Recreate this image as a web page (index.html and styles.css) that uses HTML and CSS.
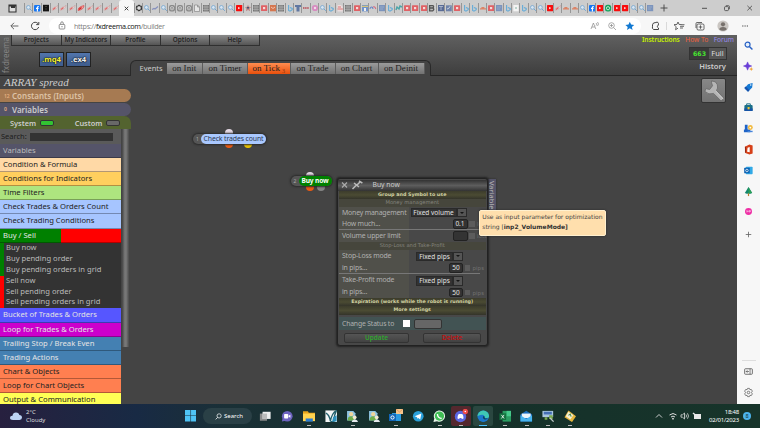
FILE: index.html
```html
<!DOCTYPE html>
<html lang="en">
<head>
  <meta charset="UTF-8">
  <title>fxDreema builder</title>
  <link rel="stylesheet" href="styles.css">
</head>
<body>
  <svg width="0" height="0" class="defs">
    <symbol id="q" viewBox="0 0 8 8"><circle cx="3.4" cy="3.4" r="1.9" fill="#d9e6f2" stroke="#73a6d0" stroke-width=".8"/><path d="M5 5l1.8 1.8" stroke="#73a6d0" stroke-width="1"/></symbol>
    <symbol id="f" viewBox="0 0 8 8"><rect x="1" y="1" width="6.4" height="6.6" rx="1" fill="#1877f2"/><path d="M4.4 7.6V3.4q0-1 1.4-.9M3 4.4h2.6" fill="none" stroke="#fff" stroke-width="1.1"/></symbol>
    <symbol id="k" viewBox="0 0 8 8"><path d="M1 .8h6v6.6H1z" fill="#151515"/><path d="M3 2.5h2M3 5h2" stroke="#665" stroke-width=".5"/></symbol>
    <symbol id="x" viewBox="0 0 8 8"><path d="M1 6.4q0-3 3-3.400t3-2q0 4-6 5.400" fill="#f0dcdc" stroke="#c9a5a5" stroke-width=".6"/><path d="M2 5.500l2.500-2" stroke="#d66" stroke-width="1.200"/></symbol>
    <symbol id="X" viewBox="0 0 8 8"><path d="M1 6.500q0-3 3-4t3-1q0 4-6 5" fill="#f0a0a0" stroke="#d44" stroke-width=".7"/><path d="M2 5.500l2.500-2" stroke="#c22" stroke-width="1.200"/></symbol>
    <symbol id="o" viewBox="0 0 8 8"><circle cx="4" cy="4" r="2.5" fill="#ddd" stroke="#333" stroke-width="1.5" stroke-dasharray="2.2 .4"/></symbol>
    <symbol id="w" viewBox="0 0 8 8"><path d="M1 5.5l2-1 1 .5 3-2.5" fill="none" stroke="#8690bd" stroke-width="1.2"/></symbol>
    <symbol id="g" viewBox="0 0 8 8"><rect x="1" y=".9" width="6" height="6.6" rx="2" fill="#898989"/><circle cx="4" cy="4.2" r="1.7" fill="none" stroke="#ddd" stroke-width=".7"/><circle cx="4" cy="4.2" r=".6" fill="#ddd"/></symbol>
    <symbol id="d" viewBox="0 0 8 8"><path d="M1.5 1h3l2 2v4.5h-5zM4.5 1v2h2" fill="#e6e6e6" stroke="#888" stroke-width=".7"/></symbol>
    <symbol id="n" viewBox="0 0 8 8"><path d="M1 1h6v6.5H1z" fill="#747474"/><path d="M1 3h6M1 5.3h6M3 1v6.5M5 1v6.5" stroke="#ccc" stroke-width=".5"/></symbol>
    <symbol id="y" viewBox="0 0 8 8"><rect x="1" y="1" width="6.2" height="6.2" rx=".6" fill="#f80d0d"/><path d="M3.2 2.9l2 1.2-2 1.2z" fill="#fff"/></symbol>
    <symbol id="Y" viewBox="0 0 8 8"><rect x="1" y="1.2" width="6.2" height="5.8" rx=".6" fill="#df6266"/><rect x="3" y="3" width="2.2" height="2.2" fill="#f4dada"/></symbol>
    <symbol id="s" viewBox="0 0 8 8"><path d="M4 .8l1 2 2 .3-1.5 1.6.6 2.6L4 6 2 7.3l.4-2.6L1 3.200l2-.4z" fill="#b88"/><path d="M3 3h2v1.6H3z" fill="#457"/></symbol>
    <symbol id="b" viewBox="0 0 8 8"><path d="M2.6 1v5.4l1.4.8 2.2-1.4v-1.3L3.9 3.6" fill="none" stroke="#66acd8" stroke-width="1.1"/></symbol>
    <symbol id="r" viewBox="0 0 8 8"><path d="M1 1h6v6.3H1z" fill="#d4764f"/><path d="M2 3l2 1.5L6 3" stroke="#f5ccbb" stroke-width=".9" fill="none"/></symbol>
    <symbol id="j" viewBox="0 0 8 8"><path d="M1 1h6v2H5.5v4.5h-3V3H1z" fill="#6178a2"/></symbol>
    <symbol id="i" viewBox="0 0 8 8"><path d="M1 4h6" stroke="#bd6b73" stroke-width="2.2" stroke-dasharray="1.5 .6"/></symbol>
    <symbol id="p" viewBox="0 0 8 8"><circle cx="4" cy="4" r="3.1" fill="#d78bc0"/><circle cx="4" cy="4" r="1.2" fill="#f1dcea"/></symbol>
    <symbol id="h" viewBox="0 0 8 8"><path d="M1.5 1H5l1.8 1.8v4.6H1.5z" fill="#ecdcdd"/><path d="M1.5 5h5.3M2 3h3" stroke="#d77" stroke-width="1"/></symbol>
    <symbol id="l" viewBox="0 0 8 8"><path d="M1 1h6v6.4H1z" fill="#6f93cb"/><path d="M1 2.3h6" stroke="#efd268"/><path d="M3 7V4h2v3z" fill="#eee"/></symbol>
    <symbol id="a" viewBox="0 0 8 8"><path d="M1 5q0-2 1.4-2T4 5" fill="none" stroke="#6784c4" stroke-width="1.1"/><path d="M4 3q2-1 2.8 2" fill="none" stroke="#d56b82" stroke-width="1.1"/></symbol>
    <symbol id="t" viewBox="0 0 8 8"><path d="M1 1h6.2v6.2H1z" fill="#7c94bd"/><path d="M2 3h4M2 5h3" stroke="#a9b9d2" stroke-width=".6"/></symbol>
    <symbol id="m" viewBox="0 0 8 8"><path d="M1 6l1-3 2 2 1-3 2 1" fill="none" stroke="#4ba5a8" stroke-width="1.4"/></symbol>
    <symbol id="B" viewBox="0 0 8 8"><path d="M1.6 1.6h3.2q1.6 1.2 0 2.4 2 1.2 0 2.8H1.6zM1.6 4h3" fill="#bbb" stroke="#555" stroke-width="1.3"/></symbol>
    <symbol id="T" viewBox="0 0 8 8"><path d="M1 1h6.2v6.2H1z" fill="#596b95"/><path d="M2 2.5h4M4 2.5V6" stroke="#c6cede" stroke-width=".7"/></symbol>
    <symbol id="e" viewBox="0 0 8 8"><path d="M1 1.3h5.8v6H1z" fill="#6f83aa"/><path d="M2 5q2 0 3-2.6" stroke="#e3e8ef" fill="none" stroke-width=".8"/></symbol>
    <symbol id="z" viewBox="0 0 8 8"><path d="M1 4.9h6M2.4 3.6h3" stroke="#dc8467" stroke-width="1.1"/></symbol>
    <symbol id="v" viewBox="0 0 8 8"><path d="M1.3 1h5.4v6.3H1.3z" fill="#f3f3f3"/><circle cx="4" cy="4" r=".8" fill="#7a9"/></symbol>
    <symbol id="u" viewBox="0 0 8 8"><rect x="1" y=".8" width="6.2" height="6.8" rx="2.5" fill="#18a35d"/><circle cx="4" cy="4.2" r="1.6" fill="none" stroke="#dff5e8" stroke-width=".8"/></symbol>
    <symbol id="person" viewBox="0 0 12 12"><path d="M1 1h6l2 2v7H1z" fill="#8fc4e2"/><circle cx="5" cy="4" r="2" fill="#f0d59b"/><path d="M1.500 10q0-4 3.500-4t3 4z" fill="#6fae4a"/><circle cx="8.3" cy="7" r="1.8" fill="#f4e9cf"/><path d="M5.500 12q0-3 2.900-3t3.100 3z" fill="#e8ecef"/></symbol>
  </svg>

  <div class="tabstrip">
    <svg class="workspace" viewBox="0 0 9 9"><path d="M1 1h7v7H1z" fill="#ddd" stroke="#333" stroke-width="1.1"/><path d="M1 1.7h7M3 3.2h4" stroke="#333" stroke-width="1.6"/></svg>
    <div class="tabs" id="tabsLeft"></div>
    <div class="tab-active"><svg viewBox="0 0 5 5"><path d="M.7.7l3.6 3.6M4.3.7L.7 4.3" stroke="#333" stroke-width=".9"/></svg></div>
    <div class="tabs tabs-right" id="tabsRight"></div>
    <svg class="newtab" viewBox="0 0 8 8"><path d="M4 .5v7M.5 4h7" stroke="#444" stroke-width=".9"/></svg>
    <svg class="winbtns" viewBox="0 0 52 8"><path d="M1 4.3h5" stroke="#444" stroke-width=".9"/><rect x="23.5" y="2.6" width="4" height="4" rx="1" fill="none" stroke="#444" stroke-width=".8"/><path d="M24.8 1.6h2.4q1.3 0 1.3 1.3v2.3" fill="none" stroke="#444" stroke-width=".7"/><path d="M46.4 1.8l4.6 4.6M51 1.8l-4.6 4.6" stroke="#444" stroke-width=".8"/></svg>
  </div>

  <div class="addressbar">
    <svg class="nav" viewBox="0 0 40 12"><path d="M9.4 6H2M5 2.8L1.8 6 5 9.2" fill="none" stroke="#555" stroke-width=".9"/><path d="M29 3.6A3.7 3.7 0 1 0 29.7 7M29.8 2v2.6h-2.6" fill="none" stroke="#444" stroke-width="1"/></svg>
    <div class="url">
      <svg class="lock" viewBox="0 0 8 9"><rect x="1.2" y="3.4" width="5.6" height="4.6" rx=".8" fill="none" stroke="#777" stroke-width=".8"/><path d="M2.7 3.4V2.2q0-1.4 1.3-1.4t1.3 1.4v1.2" fill="none" stroke="#777" stroke-width=".8"/><circle cx="4" cy="5.7" r=".6" fill="#777"/></svg>
      <span class="url-text">https://<b>fxdreema.com</b>/builder</span>
      <svg class="url-icons" viewBox="0 0 48 10"><path d="M1 8l2.4-6 2.4 6M1.9 6h3M6 2q1.5 1 0 2.6M7.5 1q2 2 0 4" fill="none" stroke="#888" stroke-width=".7"/><circle cx="21.5" cy="4.5" r="2.8" fill="none" stroke="#888" stroke-width=".7"/><path d="M23.6 6.6L26 9M20 4.5h3M21.5 3v3" stroke="#888" stroke-width=".7"/><path d="M39.8.8l1.3 2.8 3.1.3-2.3 2 .7 3-2.8-1.6L37 8.9l.7-3-2.3-2 3.1-.3z" fill="#1279d2"/></svg>
    </div>
    <svg class="tools" viewBox="0 0 104 14"><path d="M14.5 4.5q-1-2.5-2.6-1L9.5 4Q8 6 8.5 7.2 7.8 9.5 9.5 10.5h5V9q-2.6-1-.2-3z" fill="none" stroke="#444" stroke-width="1"/><path d="M22.5 3v8" stroke="#ccc" stroke-width=".7"/><path d="M34 3l1 2.4 2.8.2M34 3l-1 2.4-3 .3 2.2 2-.6 3L34 9.2M36 7.3h4M36 9h3M37.500 5.700h3" fill="none" stroke="#444" stroke-width=".8"/><rect x="53" y="5" width="7" height="6" rx="1.2" fill="none" stroke="#444" stroke-width=".8"/><path d="M52 9V4.500q0-1 1-1h5M56.500 6.300v3.500M54.700 8h3.600" fill="none" stroke="#444" stroke-width=".8"/><circle cx="79" cy="7" r="5.600" fill="#cac6c2"/><circle cx="79" cy="5.300" r="2.100" fill="#77716c"/><path d="M75.300 10.500q0-2.500 3.700-2.500t3.700 2.500q-3.700 2.500-7.400 0" fill="#77716c"/><path d="M98.200 7h7" stroke="#444" stroke-width="1.200" stroke-dasharray="1.200 1.100"/></svg>
  </div>

  <div class="main">
    <div class="app">
      <div class="header">
        <div class="brand"><span>fxdreema</span></div>
        <div class="header-left">
          <div class="menu"><span>Projects</span><span>My Indicators</span><span>Profile</span><span>Options</span><span>Help</span></div>
          <div class="export"><span class="mq4">.mq4</span><span>.ex4</span></div>
        </div>
        <div class="header-right">
          <div class="links"><span class="instr">Instructions</span><span class="howto">How To</span><span class="forum">Forum</span></div>
          <div class="counter"><span class="num">663</span><span class="full">Full</span></div>
          <div class="history">History</div>
        </div>
        <div class="events">
          <span class="events-label">Events</span>
          <span class="ev ev1">on Init</span><span class="ev ev2">on Timer</span><span class="ev ev3 active">on Tick<i>3</i></span><span class="ev ev4">on Trade</span><span class="ev ev5">on Chart</span><span class="ev ev6">on Deinit</span>
        </div>
      </div>

      <div class="work">
        <div class="sidebar">
          <div class="project">ARRAY spread</div>
          <div class="bar constants"><i>12</i>Constants (Inputs)</div>
          <div class="bar vars"><i>0</i>Variables</div>
          <div class="bar source"><span>System</span><em class="on"></em><span class="custom">Custom</span><em></em></div>
          <div class="panel">
            <div class="list">
              <div class="search">Search:<span class="search-input"></span></div>
              <div class="cat c-vars">Variables</div>
              <div class="cat c-cond">Condition &amp; Formula</div>
              <div class="cat c-ind">Conditions for Indicators</div>
              <div class="cat c-time">Time Filters</div>
              <div class="cat c-check">Check Trades &amp; Orders Count</div>
              <div class="cat c-check">Check Trading Conditions</div>
              <div class="cat c-buysell">Buy / Sell</div>
              <div class="sub">
                <div class="buy">Buy now</div>
                <div class="buy">Buy pending order</div>
                <div class="buy">Buy pending orders in grid</div>
                <div class="sell">Sell now</div>
                <div class="sell">Sell pending order</div>
                <div class="sell">Sell pending orders in grid</div>
              </div>
              <div class="cat c-bucket">Bucket of Trades &amp; Orders</div>
              <div class="cat c-loop">Loop for Trades &amp; Orders</div>
              <div class="cat c-trail">Trailing Stop / Break Even</div>
              <div class="cat c-trail">Trading Actions</div>
              <div class="cat c-chart">Chart &amp; Objects</div>
              <div class="cat c-chart">Loop for Chart Objects</div>
              <div class="cat c-out">Output &amp; Communication</div>
            </div>
            <div class="scroll"></div>
          </div>
        </div>

        <div class="canvas">
          <div class="wrench">
            <svg viewBox="0 0 24 24"><path d="M10 2q5 0 6 4t-1 6l8 8-3 3-8-8q-5 2-9-2l1-3 4 1 3-4-1-3z" fill="#b5b5b5" stroke="#666" stroke-width=".8"/><path d="M14 12l8 9" stroke="#ccc" stroke-width="1"/></svg>
          </div>

          <div class="node node-check">
            <b class="port in"></b><b class="port out orange"></b><b class="port out yellow"></b>
            <div class="node-body"><span class="id">1</span><span class="name">Check trades count</span></div>
          </div>
          <div class="node node-buy">
            <b class="port in"></b><b class="port out orange"></b><b class="port out grey"></b>
            <div class="node-body"><span class="id">2</span><span class="name">Buy now</span></div>
          </div>

          <div class="side-tab"><span>Variables</span></div>
          <div class="dialog">
            <div class="titlebar">
              <svg viewBox="0 0 24 10"><path d="M2 2.500l5 5M7 2.500l-5 5" stroke="#aaa" stroke-width="1.200"/><path d="M12.500 9l4-4M14 3l5 4M17 5l3-3M19 .800l3.400 2.400" stroke="#bbb" stroke-width="1.500"/></svg>
              <span>Buy now</span>
            </div>
            <div class="group">Group and Symbol to use</div>
            <div class="section">Money management</div>
            <div class="row"><label>Money management</label><div class="val"><span class="select wide">Fixed volume</span><span class="arrow"></span></div></div>
            <div class="row short"><label>How much...</label><div class="val"><span class="num-input">0.1</span><i class="chk"></i><span class="unit">lots</span></div></div>
            <div class="sep"></div>
            <div class="row"><label>Volume upper limit</label><div class="val"><span class="num-input"></span><i class="chk"></i><span class="unit">lots</span></div></div>
            <div class="section">Stop-Loss and Take-Profit</div>
            <div class="row tall"><label>Stop-Loss mode</label><div class="val"><span class="select">Fixed pips</span><span class="arrow"></span></div></div>
            <div class="row short"><label>in pips...</label><div class="val"><span class="num-input shift">50</span><i class="chk"></i><span class="unit">pips</span></div></div>
            <div class="sep"></div>
            <div class="row tall"><label>Take-Profit mode</label><div class="val"><span class="select">Fixed pips</span><span class="arrow"></span></div></div>
            <div class="row short"><label>in pips...</label><div class="val"><span class="num-input shift">50</span><i class="chk"></i><span class="unit">pips</span></div></div>
            <div class="group">Expiration (works while the robot is running)</div>
            <div class="group">More settings</div>
            <div class="status"><span>Change Status to</span><i></i><em></em></div>
            <div class="actions"><span class="update">Update</span><span class="delete">Delete</span></div>
          </div>

          <div class="tooltip"><div>Use as input parameter for optimization</div><div>string [<b>inp2_VolumeMode]</b></div></div>
        </div>
      </div>
    </div>

    <div class="edgebar">
      <svg viewBox="0 0 12 12"><circle cx="5" cy="5" r="2.700" fill="#e6f0fb" stroke="#2861c4" stroke-width="1.300"/><path d="M7 7l3.300 3.300" stroke="#2861c4" stroke-width="1.600"/></svg>
      <svg viewBox="0 0 12 12"><path d="M5 1l1.300 3.200L9.500 5.500 6.300 6.800 5 10 3.700 6.800.500 5.500l3.200-1.300z" fill="#6a3fd6" stroke="#6a3fd6" stroke-width=".6"/><path d="M9 6.500l.700 1.600 1.600.700-1.600.700L9 11l-.700-1.500-1.600-.700 1.600-.700z" fill="#f0a43c"/></svg>
      <svg viewBox="0 0 12 12"><path d="M5.500 2.500l5-1.500-.5 5-4.500 4.500-4-3.500z" fill="#1479d4"/><path d="M1.500 6l4 4.500L7 9 3 4.800z" fill="#1b4fa8"/><circle cx="8.500" cy="3.300" r=".8" fill="#fff"/></svg>
      <svg viewBox="0 0 12 12"><path d="M4 3.500V2h4v1.500" fill="none" stroke="#146a86" stroke-width="1"/><rect x="1.500" y="3.300" width="9" height="6.500" rx="1" fill="#1c6f88"/><path d="M1.500 7h9v2.800h-9z" fill="#1553a6"/><rect x="5" y="5.500" width="2.200" height="2.500" fill="#f3c530"/></svg>
      <svg viewBox="0 0 12 12"><path d="M2 2h3v5h3v3H1V7h1z" fill="#1e63c6"/><circle cx="8" cy="5" r="2.700" fill="#f1b93d"/><path d="M5 8.500h5.500v1.500H5z" fill="#4584da"/><circle cx="8" cy="5" r="1" fill="#fff"/></svg>
      <svg viewBox="0 0 12 12"><path d="M7 .5l3.500 1.200v8.600L7 11.500 2.500 9.800 2 3z" fill="#d64018"/><path d="M5 4l2.300-.8v5.800L4.500 8.500z" fill="#fff"/><path d="M2.700 3v6.500" stroke="#8f2414"/></svg>
      <svg viewBox="0 0 12 12"><rect x="3" y="2" width="7.500" height="8" rx=".8" fill="#31a9e6"/><rect x="1.300" y="3" width="6" height="6" rx=".6" fill="#0b62b3"/><circle cx="4.300" cy="6" r="1.400" fill="none" stroke="#fff" stroke-width=".8"/></svg>
      <svg viewBox="0 0 12 12"><path d="M6 1l4 6.500-2 1H4l-2-1z" fill="#14866d"/><path d="M6 1l4 6.500-4 .8z" fill="#2b9f57"/><path d="M6 8v3" stroke="#b97b2e" stroke-width="1.300"/></svg>
      <svg viewBox="0 0 12 12"><circle cx="6" cy="6" r="3.800" fill="#ee2fa5"/><path d="M4.300 7V5l1.300 1.300V5M7 7V5h1v1.500" fill="none" stroke="#fff" stroke-width=".6"/></svg>
      <svg class="plus" viewBox="0 0 12 12"><path d="M6 3v6M3 6h6" stroke="#666" stroke-width=".9"/></svg>
      <hr>
      <svg viewBox="0 0 12 12"><rect x="1.800" y="3" width="8.400" height="6" rx=".8" fill="none" stroke="#555" stroke-width=".9"/><path d="M7.700 3v6M3.300 6H6.500M4.800 4.700L3.500 6l1.300 1.300" fill="none" stroke="#555" stroke-width=".8"/></svg>
      <svg class="gear" viewBox="0 0 12 12"><path d="M5 1.500h2l.5 1.400 1.600-.2 1.100 1.800-1 1.500 1 1.500-1.100 1.800-1.600-.2L7 10.500H5l-.5-1.400-1.600.2-1.100-1.800 1-1.500-1-1.500 1.100-1.800 1.600.2z" fill="none" stroke="#555" stroke-width=".8"/><circle cx="6" cy="6" r="1.400" fill="none" stroke="#555" stroke-width=".8"/></svg>
    </div>
  </div>

  <div class="taskbar">
    <svg class="cloud" viewBox="0 0 14 10"><path d="M4 9Q1 9 1 6.800T3.500 4.700Q4 1.500 7 1.500T10.300 4q2.700.2 2.700 2.500T10.500 9z" fill="#bcd3f4"/></svg>
    <div class="weather">2°C<br>Cloudy</div>
    <svg class="start" viewBox="0 0 12 12"><path d="M0 0h5.700v5.700H0zM6.300 0H12v5.700H6.300zM0 6.300h5.700V12H0zM6.300 6.300H12V12H6.300z" fill="#4fc3f5"/></svg>
    <div class="tsearch"><svg viewBox="0 0 8 8"><circle cx="4.700" cy="3.300" r="2.400" fill="none" stroke="#fff" stroke-width=".8"/><path d="M3 5L.800 7.300" stroke="#fff" stroke-width=".9"/></svg>Search</div>
    <div class="apps">
      <span class="app-ico"><svg viewBox="0 0 14 14"><path d="M1 4h8v8H1z" fill="#8c8c8c"/><path d="M4 2h9v8H4z" fill="#eee"/><path d="M4 4h5v6H4z" fill="#bbb"/></svg></span>
      <span class="app-ico"><svg viewBox="0 0 14 14"><circle cx="7" cy="7" r="6" fill="#6d63c0"/><path d="M1 13l1-5 3 4z" fill="#6d63c0"/><rect x="3.500" y="4.600" width="4.600" height="4.800" rx=".8" fill="#fff"/><path d="M8.500 6.500l2-1.300v3.600l-2-1.300z" fill="#fff"/></svg></span>
      <span class="app-ico run"><svg viewBox="0 0 14 14"><path d="M0 1.500h5.500l1 1.500H14V7H0z" fill="#e8a51c"/><path d="M0 4h14v8.500H0z" fill="#ffd34f"/><path d="M3 9.500h8V13H3z" fill="#2b7bd1"/></svg></span>
      <span class="app-ico"><svg viewBox="0 0 14 14"><path d="M.500.500h13v13H.500z" fill="#f2f5f5"/><path d="M1 3.500q4 2 5 9Q8 3 13 .500q-3 5-3 12.500H6" fill="none" stroke="#22606c" stroke-width="1.500"/><path d="M9 8l4-2v7H8z" fill="#2d91bd"/></svg></span>
      <span class="app-ico run"><svg viewBox="0 0 12 12"><use href="#person"/></svg></span>
      <span class="app-ico"><svg viewBox="0 0 12 12"><use href="#person"/></svg></span>
      <span class="app-ico run"><svg class="big" viewBox="0 0 14 14"><path d="M3 4h9v8H3z" fill="#2b9be0"/><path d="M0 5h7v7H0z" fill="#1266b8"/><circle cx="3.500" cy="8.500" r="1.600" fill="none" stroke="#fff"/><path d="M7 0h7v5H7z" fill="#f6c58c"/><path d="M7 0l3.500 3L14 0" fill="none" stroke="#d98b51" stroke-width=".7"/></svg></span>
      <span class="app-ico"><svg viewBox="0 0 14 14"><circle cx="7" cy="7" r="6" fill="#2aa1da"/><path d="M3 7l7.500-3-1.300 6.500-2.200-1.600-1 1L5.700 8z" fill="#fff"/></svg></span>
      <span class="app-ico run"><svg viewBox="0 0 14 14"><path d="M.500 13.500l1-4A6.300 6.300 0 1 1 4.500 12.500z" fill="#e8f5ea"/><circle cx="7.200" cy="6.800" r="5.200" fill="#3fbf55"/><path d="M5 4.500q0 4.500 4.700 5" fill="none" stroke="#fff" stroke-width="1.500"/></svg></span>
      <span class="app-ico run discord"><svg class="big" viewBox="0 0 14 14"><circle cx="6.500" cy="7.500" r="5.700" fill="#5a66e0"/><path d="M3.500 9.500q0-4 1.500-4.500h3q1.500.5 1.500 4.500l-1.500.5-.8-1h-1.400l-.8 1z" fill="#fff"/><circle cx="11.300" cy="2.500" r="2.700" fill="#f04a4a"/><circle cx="11.300" cy="2.500" r=".8" fill="#fff"/></svg></span>
      <span class="app-ico edge"><svg viewBox="0 0 14 14"><circle cx="7" cy="7" r="6.500" fill="#1b78cd"/><path d="M.500 7a6.500 6.500 0 0 1 13 0q0 2.500-3.500 2.500-2 0-1.500-2Q8 5 5.500 5.300 2.500 5.500.500 7" fill="#3fc7b4"/><path d="M8.500 7.500q-.5 2 1.500 2 1.500 0 2.500-.8-2 3-5 1.300-1.500-1-.5-3 1-.5 1.500.5" fill="#0d3f62"/></svg></span>
      <span class="app-ico run"><svg viewBox="0 0 14 14"><path d="M4 1h9.500v12H4z" fill="#2a9d61"/><path d="M8.500 1h5v6h-5z" fill="#45c98a"/><path d="M.500 3.800h7.500v7.400H.500z" fill="#12713e"/><path d="M2.700 5.500l3 4M5.700 5.500l-3 4" stroke="#fff" stroke-width=".9"/></svg></span>
      <span class="app-ico run"><svg viewBox="0 0 14 14"><path d="M.500 5L7 .800 13.500 5v8H.500z" fill="#1b6fc0"/><path d="M2 4h10v5H2z" fill="#eaf4fb"/><path d="M.500 6L7 10l6.500-4v7H.500z" fill="#47b4ee"/></svg></span>
      <span class="app-ico run"><svg viewBox="0 0 14 14"><path d="M.500 1h12v7H.500z" fill="#a9c5df"/><path d="M2 2h9v3H2z" fill="#456fb5"/><path d="M3 8h3v3H3zM8 6h4v4H8z" fill="#7caa50"/><path d="M9 9l4 4" stroke="#bfc8c9" stroke-width="1.500"/></svg></span>
      <span class="app-ico run"><svg viewBox="0 0 14 14"><path d="M5 .500L13.500 7 9 13.500.500 8z" fill="#e7b73d"/><path d="M5 2l5.500 4L7 10.500 2 7z" fill="#f6f0d6"/><path d="M5 6l2-1.500 1 3" fill="none" stroke="#4b8b48" stroke-width="1.200"/></svg></span>
    </div>
    <svg class="tray" viewBox="0 0 48 12"><path d="M1 7.500l3-3 3 3" fill="none" stroke="#ddd" stroke-width=".9"/><path d="M14.500 5q3.500-3 7 0M16 7q2-1.800 4 0" fill="none" stroke="#ddd" stroke-width="1"/><circle cx="18" cy="8.700" r=".9" fill="#ddd"/><path d="M26 4.800h1.500l2-1.800v6l-2-1.800H26zM31 4.500q1 1.500 0 3M32.500 3.300q2 2.700 0 5.400" fill="none" stroke="#ddd" stroke-width=".8"/><path d="M39 4h7v5h-7z" fill="#e9e9e9"/><path d="M38 3l3 2.500" stroke="#e9e9e9" stroke-width="1.500"/></svg>
    <div class="clock">18:48<br>02/01/2023</div>
    <span class="badge">8</span>
  </div>

  <script>
    // one letter per open tab, each is the id of its favicon symbol
    const left = 'qfkxxxXxxxx';
    const right = 'oqwqgggdnqqqysnYrnbjipqbhnYlatbmYYYBTeYbbzYtbvbqqyxzzqfyuyyqqt';

    function drawTabs(id, icons) {
      document.getElementById(id).innerHTML = [...icons]
        .map(c => `<span class="tab"><svg viewBox="0 0 8 8"><use href="#${c}"/></svg></span>`)
        .join('');
    }

    drawTabs('tabsLeft', left);
    drawTabs('tabsRight', right);
  </script>
</body>
</html>
```
FILE: styles.css
```css
* {
  box-sizing: border-box;
}

body {
  margin: 0;
  width: 760px;
  height: 428px;
  overflow: hidden;
  display: flex;
  flex-direction: column;
  font-family: "Noto Sans", sans-serif;
  font-size: 8px;
  background: #444;
}

svg {
  display: block;
  flex: none;
}

i, em {
  font-style: normal;
}

span, div, label {
  white-space: nowrap;
}

.defs {
  position: absolute;
}

/* browser */
.tabstrip {
  height: 16px;
  flex: none;
  display: flex;
  align-items: center;
  background: #cdcdcd;
}

.workspace {
  width: 9px;
  height: 9px;
  margin: 0 3.5px 0 7.5px;
}

.tabs {
  display: flex;
  width: 99px;
  flex: none;
  padding-left: 3.5px;
}

.tab {
  width: 8.73px;
  height: 10px;
  flex: none;
  border-left: 1px solid #969696;
  display: flex;
  align-items: center;
}

.tab svg {
  width: 8px;
  height: 8px;
}

.tabs-right {
  width: 521px;
  padding: 0;
}

.tabs-right .tab {
  width: 8.4px;
}

.tab-active {
  width: 14.5px;
  height: 16px;
  flex: none;
  background: #f7f7f7;
  border-radius: 3px 3px 0 0;
  display: flex;
  align-items: center;
  justify-content: center;
}

.tab-active svg {
  width: 5px;
  height: 5px;
}

.newtab {
  width: 8px;
  height: 8px;
  margin-left: 5px;
}

.winbtns {
  width: 52px;
  height: 8px;
  margin-left: 33px;
}

.addressbar {
  height: 19px;
  flex: none;
  display: flex;
  align-items: center;
  background: #f7f7f7;
}

.nav {
  width: 40px;
  height: 12px;
  margin-left: 9px;
}

.url {
  width: 592px;
  height: 16px;
  border-radius: 8px;
  background: #fff;
  display: flex;
  align-items: center;
  padding-left: 9px;
}

.lock {
  width: 8px;
  height: 9px;
  margin-right: 8px;
}

.url-text {
  font-family: "Open Sans", sans-serif;
  font-size: 7.2px;
  letter-spacing: -.32px;
  color: #808080;
}

.url-text b {
  font-weight: normal;
  color: #111;
}

.url-icons {
  width: 48px;
  height: 10px;
  margin-left: auto;
  margin-right: 3px;
}

.tools {
  width: 104px;
  height: 14px;
  margin-left: 3px;
}

/* app */
.main {
  height: 369px;
  flex: none;
  display: flex;
}

.app {
  width: 737px;
  display: flex;
  flex-direction: column;
  background: #444;
}

.header {
  height: 41px;
  flex: none;
  position: relative;
  display: flex;
  background: linear-gradient(#606060, #3e3e3e);
  border-bottom: 1px solid #262626;
}

.brand {
  width: 11px;
  color: #858585;
  display: flex;
  align-items: center;
  justify-content: center;
}

.brand span {
  writing-mode: vertical-rl;
  transform: rotate(180deg);
  font-size: 8px;
}

.menu {
  display: flex;
  width: 249px;
  height: 10.5px;
  border: 1px solid #303030;
  border-top: 0;
  background: linear-gradient(#8a8a8a, #555);
}

.menu span {
  flex: 1;
  text-align: center;
  font-weight: 600;
  font-size: 6.4px;
  line-height: 9px;
  color: #262626;
}

.menu span + span {
  border-left: 1px solid #303030;
}

.export {
  display: flex;
  gap: 2px;
  padding: 6.5px 0 0 28px;
}

.export span {
  width: 25px;
  height: 15px;
  border: 1px solid #222;
  background: linear-gradient(#5275ac, #3e5c8c);
  color: #eee;
  font-size: 7.7px;
  font-weight: bold;
  line-height: 13px;
  text-align: center;
  text-shadow: 0 0 1px #000, 0 0 2px #000;
}

.export .mq4 {
  color: #f2ef38;
}

.header-right {
  margin-left: auto;
  display: flex;
  flex-direction: column;
  align-items: flex-end;
  padding-right: 3px;
}

.links {
  display: flex;
  gap: 5.5px;
  font-size: 6.6px;
  line-height: 9px;
}

.instr {
  color: #c6f000;
  font-weight: 600;
  letter-spacing: -.1px;
}

.howto {
  color: #f0603c;
}

.forum {
  color: #9a8cf0;
}

.counter {
  margin: 3px 7px 0 0;
  width: 38px;
  height: 13px;
  border: 1px solid #333;
  background: #3a3a3a;
  display: flex;
  line-height: 11px;
}

.counter .num {
  width: 19px;
  text-align: center;
  color: #46e030;
  font-family: "DejaVu Sans", sans-serif;
  font-size: 6.3px;
  line-height: 12px;
  font-weight: bold;
}

.counter .full {
  flex: 1;
  text-align: center;
  background: #555;
  color: #ddd;
  font-size: 7.5px;
}

.history {
  margin: 0 8px 0 0;
  color: #ccc;
  font-size: 7.6px;
  font-weight: 600;
  line-height: 12px;
}

.events {
  position: absolute;
  left: 130px;
  top: 25px;
  width: 301px;
  height: 16px;
  border: 1px solid #292929;
  border-bottom: 0;
  border-radius: 6px 6px 0 0;
  background: #444;
  display: flex;
  padding: 2px 0 0 8.5px;
}

.events-label {
  width: 27px;
  flex: none;
  color: #ccc;
  font-size: 7.5px;
  line-height: 11px;
}

.ev {
  height: 11px;
  flex: none;
  line-height: 10px;
  text-align: center;
  color: #222;
  font-family: "Liberation Serif", serif;
  font-size: 9px;
  letter-spacing: .05px;
  background: linear-gradient(#9b9b9b, #727272);
  border-right: 1px solid #5c5c5c;
}

.ev1 { width: 36.5px; }
.ev2 { width: 45px; }
.ev3 { width: 42.5px; }
.ev4 { width: 45px; }
.ev5 { width: 43px; }
.ev6 { width: 46px; }

.ev.active {
  background: linear-gradient(#ff8d50, #e9500c);
}

.ev i {
  font-size: 6px;
  vertical-align: -2px;
  color: #8d3813;
  margin-left: 2px;
}

.work {
  flex: 1;
  min-height: 0;
  display: flex;
}

.sidebar {
  width: 131px;
  display: flex;
  flex-direction: column;
}

.project {
  height: 13px;
  flex: none;
  padding-left: 4px;
  font-family: "Liberation Serif", serif;
  font-style: italic;
  font-size: 11px;
  line-height: 12px;
  color: #ccc;
}

.bar {
  height: 13px;
  flex: none;
  margin-bottom: .7px;
  padding-left: 4px;
  border-radius: 0 7px 7px 0;
  display: flex;
  align-items: center;
  font-size: 8px;
  font-weight: 600;
  color: #ccc;
}

.bar i {
  width: 8px;
  font-size: 5px;
  color: #e5b080;
}

.constants {
  background: #a67a52;
  color: #ddc2a5;
}

.vars {
  background: #555469;
}

.source {
  background: #53632f;
  margin: 0;
  padding-left: 10px;
  border-radius: 0 7px 0 0;
  font-size: 7.4px;
}

.source em {
  width: 14px;
  height: 6px;
  margin-left: 4px;
  border-radius: 2px;
  border: 1px solid #333;
  background: #686868;
}

.source .on {
  background: #32c332;
}

.custom {
  margin-left: 20.5px;
}

.panel {
  flex: 1;
  min-height: 0;
  display: flex;
  overflow: hidden;
}

.list {
  width: 121px;
}

.search {
  height: 14.3px;
  background: #5a5a5a;
  color: #1c1c1c;
  font-size: 7.5px;
  line-height: 13px;
  padding-left: 1px;
  display: flex;
  align-items: center;
}

.search-input {
  width: 83px;
  height: 8px;
  margin-left: 3px;
  background: #333;
}

.cat {
  height: 14.17px;
  padding-left: 3px;
  font-size: 7.65px;
  line-height: 13.2px;
  color: #222;
  border-bottom: .5px solid rgba(0, 0, 0, .3);
}

.c-vars { background: #555469; color: #bbb; }
.c-cond { background: #ffd9a6; }
.c-ind { background: #ffcf5e; }
.c-time { background: #aee57f; }
.c-check { background: #a6c5ff; }
.c-buysell { background: linear-gradient(90deg, #008000 50%, #f00 50%); color: #e4e4e4; }
.c-bucket { background: #5656ff; color: #e4e4e4; }
.c-loop { background: #cc00cc; color: #e4e4e4; }
.c-trail { background: #4480b2; color: #e4e4e4; }
.c-chart { background: #ff7f50; }
.c-out { background: #ffff55; }

.sub {
  background: #333;
}

.sub div {
  height: 10.95px;
  padding-left: 2px;
  border-left: 4px solid #008000;
  font-size: 7.6px;
  line-height: 9.6px;
  color: #bbb;
}

.sub .sell {
  border-color: #f00;
}

.scroll {
  width: 7px;
  height: 218px;
  margin-left: 1px;
  background: linear-gradient(90deg, #444, #777 40%, #777 60%, #4a4a4a);
}

.canvas {
  flex: 1;
  position: relative;
}

.wrench {
  position: absolute;
  left: 570px;
  top: 2px;
  width: 25px;
  height: 25px;
  border: 1px solid #333;
  border-radius: 2px;
  background: linear-gradient(#878787, #737373);
}

.wrench svg {
  width: 23px;
  height: 23px;
}

/* nodes */
.node {
  position: absolute;
}

.node-check {
  left: 62px;
  top: 57.5px;
}

.node-buy {
  left: 159.5px;
  top: 100px;
}

.node-body {
  position: relative;
  display: flex;
  height: 10px;
  padding-left: 1px;
  border-radius: 5px;
  background: #555;
  box-shadow: 0 0 2px 1px #2a2a2a;
}

.node .id {
  width: 7px;
  font-size: 5px;
  line-height: 10px;
  text-align: center;
  color: #aaa;
}

.node .name {
  width: 65px;
  border-radius: 5px;
  text-align: center;
  font-size: 6.9px;
  letter-spacing: -.12px;
  line-height: 9.5px;
  color: #2b394f;
  background: #a9c8ff;
}

.node-buy .name {
  width: 33px;
  color: #fff;
  font-weight: bold;
  font-size: 6.6px;
  background: #008000;
}

.port {
  position: absolute;
  width: 8px;
  height: 8px;
  border-radius: 4px;
  background: #e4d8e4;
}

.node-check .port { left: 32px; }
.node-buy .port { left: 15.5px; }
.node .port.in { top: -4.5px; }
.node .port.out { top: 6.7px; }
.port.orange { background: #ee5a12; }
.node-check .port.yellow { left: 50.5px; background: #edc500; }
.node-buy .port.grey { left: 26px; background: #858585; }

/* dialog */
.side-tab {
  position: absolute;
  left: 357px;
  top: 102.5px;
  width: 8px;
  height: 38px;
  padding-top: 2px;
  background: #555469;
  box-shadow: 0 0 2px #222;
}

.side-tab span {
  display: block;
  writing-mode: vertical-rl;
  font-size: 7.5px;
  line-height: 8px;
  color: #bbb;
}

.dialog {
  position: absolute;
  left: 205.5px;
  top: 102px;
  width: 151.5px;
  height: 168px;
  padding: 1px 1.5px;
  border: 1px solid #222;
  border-radius: 3px;
  background: #484848;
  box-shadow: 0 0 2px 1px #222;
  color: #b0b0b0;
}

.titlebar {
  height: 10.5px;
  margin: 0 -1.5px;
  background: linear-gradient(#333, #5d5d5d 50%, #333);
  display: flex;
  align-items: center;
  font-size: 6.8px;
  line-height: 9px;
  color: #ccc;
}

.titlebar svg {
  width: 24px;
  height: 10px;
  margin: 0 9px 0 2px;
}

.titlebar span {
  padding-bottom: 2px;
}

.group {
  height: 8.4px;
  text-align: center;
  background: linear-gradient(#3c3c2c, #4b4b33, #34342a);
  color: #d2d2a4;
  font-family: "DejaVu Sans", sans-serif;
  font-weight: bold;
  font-size: 4.8px;
  line-height: 8px;
}

.section {
  height: 7.7px;
  text-align: center;
  background: #46463c;
  color: #85857c;
  font-family: "DejaVu Sans", sans-serif;
  font-size: 5.2px;
  line-height: 7px;
}

.row {
  height: 12px;
  display: flex;
}

.row.short {
  height: 10.4px;
}

.row.tall {
  height: 13.2px;
}

.row label {
  width: 70px;
  flex: none;
  padding-left: 3px;
  background: #50504a;
  font-size: 6.9px;
  letter-spacing: -.18px;
  line-height: 11px;
}

.row.short label {
  line-height: 9px;
}

.row.tall label {
  line-height: 12.5px;
}

.val {
  flex: 1;
  display: flex;
  align-items: center;
}

.select {
  width: 37px;
  height: 9.5px;
  margin-left: 7px;
  border: 1px solid #2a2a2a;
  background: #333;
  color: #e2e2e2;
  text-align: center;
  font-size: 6.5px;
  line-height: 7.5px;
}

.select.wide {
  width: 46px;
  margin-left: 1.5px;
}

.arrow {
  width: 10px;
  height: 9.5px;
  background: #555;
  border: 1px solid #2a2a2a;
  display: flex;
  align-items: center;
  justify-content: center;
}

.arrow::after {
  content: "";
  border: 2px solid transparent;
  border-top: 2.5px solid #151515;
  border-bottom: 0;
}

.num-input {
  width: 15px;
  height: 9.5px;
  margin-left: 43.5px;
  flex: none;
  border: 1px solid #222;
  border-radius: 2px;
  background: #333;
  color: #e2e2e2;
  text-align: center;
  font-size: 6.5px;
  line-height: 7.5px;
}

.num-input.shift {
  width: 14px;
  margin-left: 40px;
}

.chk {
  width: 5.5px;
  height: 5.5px;
  flex: none;
  margin: 0 2.5px 0 1.5px;
  background: #5c5c5c;
}

.unit {
  width: 5px;
  font-size: 5.8px;
  color: #707070;
}

.sep {
  height: 1px;
  margin-right: 6px;
  background: #777;
}

.status {
  height: 13px;
  margin: 2.5px 0 3px;
  padding-left: 3px;
  background: #425353;
  display: flex;
  align-items: center;
  font-size: 6.8px;
  letter-spacing: -.15px;
}

.status i {
  width: 7px;
  height: 7px;
  margin-left: 8.5px;
  background: #fff;
}

.status em {
  width: 28px;
  height: 10px;
  margin-left: 4.5px;
  border: 1px solid #333;
  border-radius: 2px;
  background: #666;
}

.actions {
  display: flex;
  gap: 14px;
  padding-left: 5px;
}

.actions span {
  width: 65px;
  height: 9.5px;
  border: 1px solid #333;
  border-radius: 2px;
  background: linear-gradient(#555, #424242);
  font-size: 6.5px;
  font-weight: 600;
  line-height: 7.5px;
  text-align: center;
}

.actions .delete {
  width: 58px;
  color: #c01010;
}

.actions .update {
  color: #2fa52f;
}

.tooltip {
  position: absolute;
  left: 348px;
  top: 133.5px;
  width: 126.5px;
  height: 26px;
  padding: 1.5px 2.3px;
  border-radius: 2px;
  border: 1px solid #fff0cf;
  background: #ffdfad;
  box-shadow: 0 0 2px #222;
  font-family: "DejaVu Sans", sans-serif;
  font-size: 6px;
  line-height: 10px;
  color: #444;
}

.tooltip b {
  color: #333;
}

/* edge side panel */
.edgebar {
  width: 23px;
  background: #f7f7f7;
  display: flex;
  flex-direction: column;
  align-items: center;
  padding-top: 5px;
}

.edgebar svg {
  width: 11px;
  height: 11px;
  margin-bottom: 9.8px;
}

.edgebar .plus {
  margin-top: 2px;
}

.edgebar hr {
  width: 14px;
  margin: auto 0 5.5px;
  border: 0;
  border-top: 1px solid #ddd;
}

.edgebar .gear {
  margin-bottom: 6px;
}

/* windows taskbar */
.taskbar {
  height: 24px;
  flex: none;
  display: flex;
  align-items: center;
  background: linear-gradient(90deg, #27203f, #182a44 18%, #1a3036 30%, #15302a 55%, #17342a);
  color: #fff;
}

.cloud {
  width: 14px;
  height: 10px;
  margin-left: 9px;
}

.weather {
  width: 159px;
  padding-left: 3px;
  font-size: 6px;
  line-height: 8px;
  color: #ddd;
}

.start {
  width: 11.5px;
  height: 11.5px;
  margin-left: 2.5px;
}

.tsearch {
  width: 49px;
  height: 16px;
  margin-left: 7px;
  border-radius: 8px;
  background: #2a4046;
  display: flex;
  align-items: center;
  padding-left: 12px;
  font-size: 6px;
}

.tsearch svg {
  width: 7px;
  height: 7px;
  margin-right: 2px;
}

.apps {
  display: flex;
  gap: 1.75px;
  margin-left: 3.5px;
}

.app-ico {
  width: 20px;
  height: 20px;
  border-radius: 2px;
  display: flex;
  align-items: center;
  justify-content: center;
  position: relative;
}

.app-ico svg {
  width: 12.5px;
  height: 12.5px;
}

.app-ico .big {
  width: 14px;
  height: 14px;
}

.run::after,
.edge::after {
  content: "";
  position: absolute;
  bottom: 0;
  width: 4px;
  height: 1px;
  background: #bbb;
}

.edge::after {
  width: 8px;
  background: #4cc2ff;
}

.discord {
  background: #54282e;
}

.edge {
  background: #2a4740;
}

.tray {
  width: 48px;
  height: 12px;
  margin-left: 75px;
}

.clock {
  width: 35px;
  text-align: right;
  font-size: 6px;
  letter-spacing: -.2px;
  line-height: 8px;
  margin-left: 1px;
}

.badge {
  width: 8px;
  height: 8px;
  margin-left: 4px;
  border-radius: 50%;
  background: #4cb4ee;
  color: #133;
  text-align: center;
  font-size: 5.5px;
  line-height: 8px;
}
```
